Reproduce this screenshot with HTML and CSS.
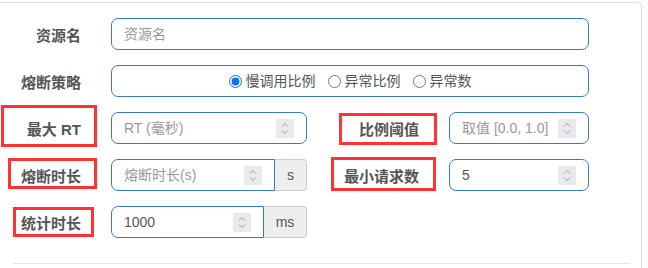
FILE: index.html
```html
<!DOCTYPE html>
<html lang="zh">
<head>
<meta charset="utf-8">
<title>熔断规则</title>
<link rel="stylesheet" href="styles.css">
</head>
<body>
<div class="card">
  <form class="form">
    <div class="row full">
      <label class="lbl">资源名</label>
      <div class="box"><input class="inp" type="text" placeholder="资源名"></div>
    </div>
    <div class="row full">
      <label class="lbl">熔断策略</label>
      <div class="box radios">
        <label class="opt"><input type="radio" name="g" checked>慢调用比例</label>
        <label class="opt"><input type="radio" name="g">异常比例</label>
        <label class="opt"><input type="radio" name="g">异常数</label>
      </div>
    </div>
    <div class="row half">
      <label class="lbl">最大 RT</label>
      <div class="box num"><input class="inp" type="text" placeholder="RT (毫秒)"><span class="spin"><svg width="18" height="19" viewBox="0 0 18 19"><path d="M6 7.5L9 4.5L12 7.5M6 11.5L9 14.5L12 11.5" fill="none" stroke="#999" stroke-width="1"/></svg></span></div>
      <label class="lbl">比例阈值</label>
      <div class="box num"><input class="inp" type="text" placeholder="取值 [0.0, 1.0]"><span class="spin"><svg width="18" height="19" viewBox="0 0 18 19"><path d="M6 7.5L9 4.5L12 7.5M6 11.5L9 14.5L12 11.5" fill="none" stroke="#999" stroke-width="1"/></svg></span></div>
    </div>
    <div class="row half">
      <label class="lbl">熔断时长</label>
      <div class="group">
        <div class="box num left"><input class="inp" type="text" placeholder="熔断时长(s)"><span class="spin"><svg width="18" height="19" viewBox="0 0 18 19"><path d="M6 7.5L9 4.5L12 7.5M6 11.5L9 14.5L12 11.5" fill="none" stroke="#999" stroke-width="1"/></svg></span></div>
        <span class="addon s">s</span>
      </div>
      <label class="lbl">最小请求数</label>
      <div class="box num"><input class="inp" type="text" value="5"><span class="spin"><svg width="18" height="19" viewBox="0 0 18 19"><path d="M6 7.5L9 4.5L12 7.5M6 11.5L9 14.5L12 11.5" fill="none" stroke="#999" stroke-width="1"/></svg></span></div>
    </div>
    <div class="row half">
      <label class="lbl">统计时长</label>
      <div class="group">
        <div class="box num left"><input class="inp" type="text" value="1000"><span class="spin"><svg width="18" height="19" viewBox="0 0 18 19"><path d="M6 7.5L9 4.5L12 7.5M6 11.5L9 14.5L12 11.5" fill="none" stroke="#999" stroke-width="1"/></svg></span></div>
        <span class="addon ms">ms</span>
      </div>
    </div>
  </form>
  <hr class="divider">
</div>
<div class="mark m1"></div>
<div class="mark m2"></div>
<div class="mark m3"></div>
<div class="mark m4"></div>
<div class="mark m5"></div>
</body>
</html>
```
FILE: styles.css
```css
html, body {
  margin: 0;
  padding: 0;
  background: #fff;
  overflow: hidden;
}
body {
  width: 648px;
  height: 268px;
  position: relative;
  font-family: "Liberation Sans", "Noto Sans CJK SC", sans-serif;
  font-size: 14px;
  color: #555;
}
.card {
  margin: 2px 6px 0 -10px;
  border: 1px solid #ddd;
  border-bottom: none;
  border-radius: 5px 5px 0 0;
  padding: 15px 0 0 9px;
  height: 266px;
  box-sizing: border-box;
}
.form {
  margin: 0;
}
.row {
  display: grid;
  height: 32px;
  margin-bottom: 15px;
}
.row:last-child {
  margin-bottom: 0;
}
.row.full {
  grid-template-columns: 111px 478px;
}
.row.half {
  grid-template-columns: 111px 196px 142px 140px;
}
.lbl {
  text-align: right;
  padding: 7px 30px 0 0;
  line-height: 22px;
  font-size: 15px;
  font-weight: bold;
  color: #555;
  white-space: nowrap;
}
.box {
  box-sizing: border-box;
  height: 32px;
  min-width: 0;
  border: 1px solid #3a7bbb;
  border-radius: 7px;
  display: flex;
  align-items: center;
  background: #fff;
}
.inp {
  flex: 1;
  width: 0;
  min-width: 0;
  border: none;
  outline: none;
  background: transparent;
  padding: 0 4px 0 12px;
  height: 30px;
  font-family: "Liberation Sans", "Noto Sans CJK SC", sans-serif;
  font-size: 14px;
  color: #555;
}
.inp::placeholder {
  color: #999;
}
.spin {
  flex: 0 0 18px;
  width: 18px;
  height: 19px;
  margin-right: 12px;
  background: #e9e9ee;
  display: flex;
}
.radios {
  justify-content: center;
}
.opt {
  display: flex;
  align-items: center;
  margin-right: 12px;
  color: #555;
  line-height: 20px;
}
.opt:last-child {
  margin-right: 0;
}
.opt input {
  margin: 0 4px 0 0;
  width: 13px;
  height: 13px;
}
.group {
  display: flex;
  height: 32px;
  min-width: 0;
}
.box.left {
  flex: 1 1 0;
  border-radius: 7px 0 0 7px;
}
.addon {
  flex: 0 0 auto;
  box-sizing: border-box;
  height: 32px;
  border: 1px solid #ccc;
  border-left: none;
  border-radius: 0 4px 4px 0;
  background: #eee;
  display: flex;
  align-items: center;
  justify-content: center;
  color: #555;
}
.addon.s { width: 32px; }
.addon.ms { width: 43px; }
.divider {
  border: none;
  border-top: 1px solid #e5e5e5;
  margin: 25px 11px 0 13px;
}
.mark {
  position: absolute;
  box-sizing: border-box;
  border: 3px solid #f33;
}
.m1 { left: 1px; top: 105px; width: 96px; height: 42px; }
.m2 { left: 339px; top: 113px; width: 98px; height: 32px; }
.m3 { left: 8px; top: 158px; width: 89px; height: 31px; }
.m4 { left: 331px; top: 157px; width: 105px; height: 34px; }
.m5 { left: 13px; top: 207px; width: 81px; height: 30px; }
```
